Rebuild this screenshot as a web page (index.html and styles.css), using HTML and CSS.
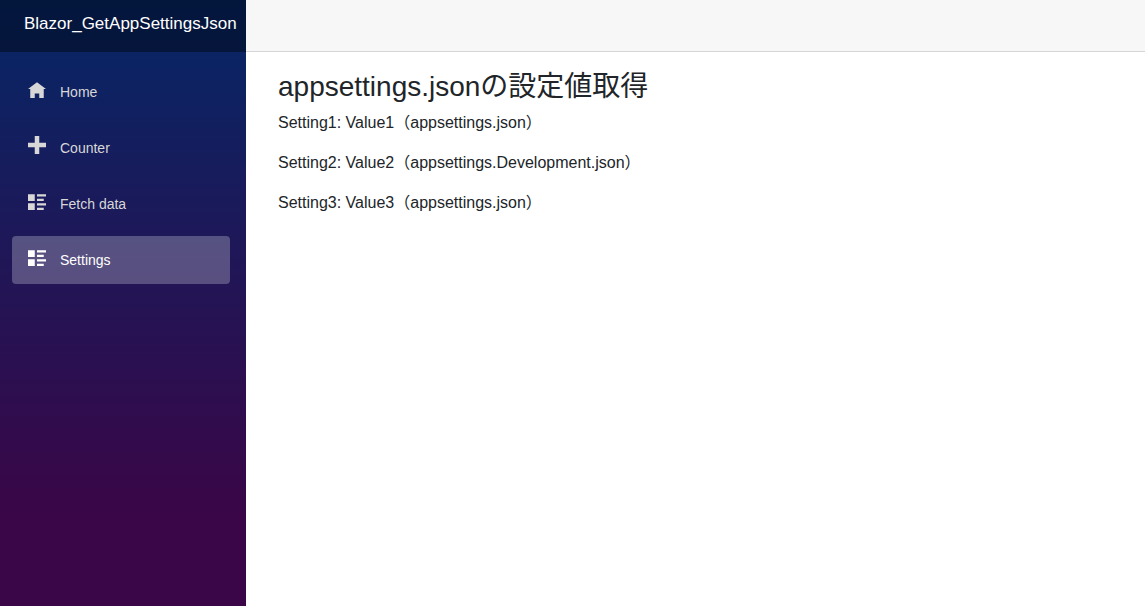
FILE: index.html
```
<!DOCTYPE html>
<html lang="ja">

<head>
    <meta charset="UTF-8">
    <meta name="viewport" content="width=device-width, initial-scale=1.0">
    <title>Blazor_GetAppSettingsJson</title>
    <link rel="stylesheet" href="styles.css">
</head>

<body>
    <div class="page">
        <div class="sidebar">
            <div class="top-row">
                <a class="navbar-brand" href="#">Blazor_GetAppSettingsJson</a>
            </div>

            <nav>
                <ul class="nav">
                    <li>
                        <a class="nav-link" href="#">
                            <svg class="icon" viewBox="0 -1 8 8" aria-hidden="true"><path d="M4 0l-4 3h1v4h2v-2h2v2h2v-4.03l1 .03-4-3z"/></svg>
                            Home
                        </a>
                    </li>
                    <li>
                        <a class="nav-link" href="#counter">
                            <svg class="icon" viewBox="0 0 8 8" aria-hidden="true"><path d="M3 0v3h-3v2h3v3h2v-3h3v-2h-3v-3h-2z"/></svg>
                            Counter
                        </a>
                    </li>
                    <li>
                        <a class="nav-link" href="#fetchdata">
                            <svg class="icon" viewBox="0 -1 8 8" aria-hidden="true"><path d="M0 0v3h3v-3h-3zm4 0v1h4v-1h-4zm0 2v1h3v-1h-3zm-4 2v3h3v-3h-3zm4 0v1h4v-1h-4zm0 2v1h3v-1h-3z"/></svg>
                            Fetch data
                        </a>
                    </li>
                    <li>
                        <a class="nav-link active" href="#settings">
                            <svg class="icon" viewBox="0 -1 8 8" aria-hidden="true"><path d="M0 0v3h3v-3h-3zm4 0v1h4v-1h-4zm0 2v1h3v-1h-3zm-4 2v3h3v-3h-3zm4 0v1h4v-1h-4zm0 2v1h3v-1h-3z"/></svg>
                            Settings
                        </a>
                    </li>
                </ul>
            </nav>
        </div>

        <div class="main">
            <div class="top-row"></div>

            <div class="content">
                <h3>appsettings.jsonの設定値取得</h3>
                <p>Setting1: Value1（appsettings.json）</p>
                <p>Setting2: Value2（appsettings.Development.json）</p>
                <p>Setting3: Value3（appsettings.json）</p>
            </div>
        </div>
    </div>
</body>

</html>
```
FILE: styles.css
```
* {
    box-sizing: border-box;
}

body {
    margin: 0;
    font-family: "Liberation Sans", Arial, "Noto Sans CJK JP", sans-serif;
    font-size: 16px;
    line-height: 24px;
    color: #212529;
    background-color: #fff;
}

.page {
    display: flex;
    min-height: 100vh;
}

.sidebar {
    flex: 0 0 246px;
    min-width: 0;
    background-image: linear-gradient(180deg, rgb(5, 39, 103) 0%, #3a0647 85%);
}

.top-row {
    display: flex;
    align-items: center;
    height: 52px;
}

.sidebar .top-row {
    padding: 0 0 4px 24px;
    background-color: rgba(0, 0, 0, 0.4);
}

.navbar-brand {
    font-size: 17px;
    color: #fff;
    text-decoration: none;
    white-space: nowrap;
}

/* Navigation links */
.nav {
    display: flex;
    flex-direction: column;
    gap: 8px;
    margin: 0;
    padding: 16px 16px 8px 12px;
    list-style: none;
}

.nav-link {
    display: flex;
    align-items: center;
    gap: 14px;
    height: 48px;
    padding: 0 16px;
    border-radius: 4px;
    font-size: 14px;
    color: #d7d7d7;
    text-decoration: none;
}

.nav-link:hover {
    background-color: rgba(255, 255, 255, 0.1);
    color: #fff;
}

.nav-link.active {
    background-color: rgba(255, 255, 255, 0.25);
    color: #fff;
}

.icon {
    width: 18px;
    height: 18px;
    margin-bottom: 6px;
    fill: currentColor;
}

/* Page content */
.main {
    flex: 1;
    min-width: 0;
}

.main .top-row {
    background-color: #f7f7f7;
    border-bottom: 1px solid #d6d5d5;
}

.content {
    padding: 18px 32px 0;
}

h3 {
    margin: 0 0 8px;
    font-size: 28px;
    font-weight: 400;
    line-height: 33px;
}

p {
    margin: 0 0 16px;
}
```
